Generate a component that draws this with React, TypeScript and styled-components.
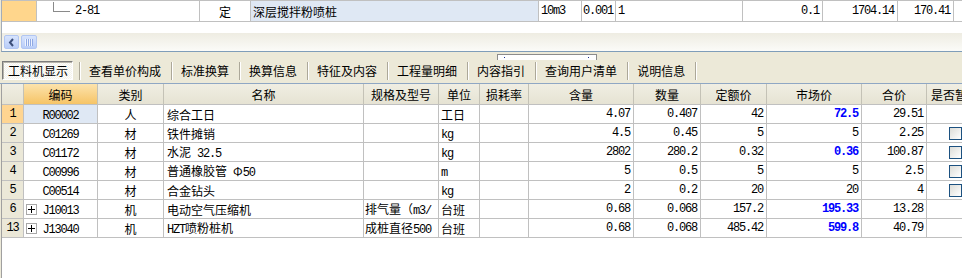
import React from "react";
import styled, { createGlobalStyle, css } from "styled-components";

const GlobalStyle = createGlobalStyle`
  html, body {
    margin: 0;
    padding: 0;
    background: #ece9d8;
  }
  body {
    font-family: "Noto Sans CJK SC", "Noto Sans", sans-serif;
    font-size: 12px;
    color: #000;
  }
`;

const Page = styled.div`
  width: 962px;
  height: 278px;
  overflow: hidden;
  display: flex;
  flex-direction: column;
  background: #ece9d8;
`;

const Latin = styled.span<{ $hl?: boolean }>`
  font-family: "Liberation Mono", monospace;
  letter-spacing: -1.2px;
  font-weight: ${(p) => (p.$hl ? 700 : 400)};
  color: ${(p) => (p.$hl ? "#0000ff" : "#000")};
`;

const TextRun = styled.span`
  white-space: pre;
`;

const Txt = ({ children }: { children: string }) => (
  <TextRun>
    {children
      .split(/([\x20-\x7e]+)/)
      .filter(Boolean)
      .map((s, i) =>
        /^[\x20-\x7e]+$/.test(s) ? (
          <Latin key={i}>{s}</Latin>
        ) : (
          <React.Fragment key={i}>{s}</React.Fragment>
        )
      )}
  </TextRun>
);

/* ---------- upper pane ---------- */

const TopPane = styled.div`
  height: 52px;
  box-sizing: border-box;
  margin-left: 1px;
  border-left: 1px solid #a3acb8;
  border-bottom: 1px solid #7f9db9;
  background: #fff;
  display: flex;
  flex-direction: column;
`;

const Row = styled.div<{ $cols: string; $h: number }>`
  display: grid;
  grid-template-columns: ${(p) => p.$cols};
  height: ${(p) => p.$h}px;
  flex-shrink: 0;
`;

const TopRowWrap = styled(Row)`
  border-top: 1px solid #c0c0c0;
`;

type Align = "left" | "center" | "right";

const Cell = styled.div<{ $align?: Align; $bg?: string; $pad?: number }>`
  box-sizing: border-box;
  border-right: 1px solid #c0c0c0;
  border-bottom: 1px solid #c0c0c0;
  display: flex;
  align-items: center;
  justify-content: ${(p) =>
    p.$align === "right"
      ? "flex-end"
      : p.$align === "center"
      ? "center"
      : "flex-start"};
  padding: 0 ${(p) => p.$pad ?? 3}px;
  overflow: hidden;
  white-space: nowrap;
  min-width: 0;
  background: ${(p) => p.$bg ?? "transparent"};
`;

const TreeLine = styled.span`
  width: 17px;
  height: 10px;
  margin: -9px 5px 0 16px;
  box-sizing: border-box;
  border-left: 1px solid #8a8a8a;
  border-bottom: 1px solid #8a8a8a;
  flex-shrink: 0;
`;

const Gap = styled.div`
  flex: 1;
`;

const HScroll = styled.div`
  height: 18px;
  display: flex;
  align-items: center;
  gap: 2px;
  padding-left: 2px;
  background: linear-gradient(#eeece2, #fbfbf8);
`;

const ScrollBtn = styled.div<{ $w: number }>`
  width: ${(p) => p.$w}px;
  height: 14px;
  box-sizing: border-box;
  border: 1px solid #b2c6f2;
  border-radius: 2px;
  background: linear-gradient(#d8e4fd, #b9cdf8);
  display: flex;
  align-items: center;
  justify-content: center;
`;

const Splitter = styled.div`
  height: 8px;
  display: flex;
  align-items: flex-end;
  padding-left: 497px;
`;

const Grip = styled.div`
  width: 100px;
  height: 6px;
  box-sizing: border-box;
  border: 1px solid #8c8c8c;
  border-bottom: none;
  background: #fff;
  display: flex;
  justify-content: space-between;
  align-items: center;
  padding: 0 7px 0 6px;
`;

const GripDot = styled.span`
  width: 1px;
  height: 1px;
  background: #1c2f8c;
`;

/* ---------- tabs ---------- */

const TabBar = styled.div`
  height: 24px;
  box-sizing: border-box;
  border-bottom: 1px solid #8fa7c4;
  display: flex;
  align-items: center;
  padding: 0 0 2px 2px;
`;

const Tab = styled.div<{ $active?: boolean }>`
  height: 19px;
  box-sizing: border-box;
  display: flex;
  align-items: center;
  padding: 0 10px 0 9px;
  white-space: nowrap;
  ${(p) =>
    p.$active &&
    css`
      padding: 0 4px 0 5px;
      margin-right: 6px;
      border: 1px solid;
      border-color: #7c7c7c #fff #fff #7c7c7c;
      box-shadow: inset 1px 1px #b8b6ac;
      background: repeating-conic-gradient(#f3f2ec 0 25%, #fdfdfb 0 50%) 0 0 /
        2px 2px;
    `}
`;

const TabSep = styled.div`
  width: 1px;
  height: 18px;
  background: #aca899;
  box-shadow: 1px 0 #fff;
`;

/* ---------- lower grid ---------- */

const LowerPane = styled.div`
  flex: 1;
  margin-left: 1px;
  border-left: 1px solid #a0a0a0;
  background: #fff;
  display: flex;
  flex-direction: column;
`;

const HeadCell = styled(Cell)<{ $sel?: boolean }>`
  justify-content: center;
  border-right-color: #c4c2b6;
  background: ${(p) =>
    p.$sel
      ? "linear-gradient(#fce3ac, #f6c466)"
      : "linear-gradient(#f0eee3, #e6e3d3)"};
`;

const NoCell = styled(Cell)<{ $sel?: boolean }>`
  justify-content: center;
  padding: 0;
  background: ${(p) => (p.$sel ? "#ffd591" : "#ebe8d8")};
`;

const CodeCell = styled(Cell)`
  padding: 0 13px 0 2px;
`;

const CodeText = styled.div`
  flex: 1;
  text-align: center;
`;

const ExpandBox = styled.span<{ $show: boolean }>`
  width: 11px;
  height: 11px;
  flex-shrink: 0;
  visibility: ${(p) => (p.$show ? "visible" : "hidden")};
  display: flex;
`;

const CheckBox = styled.span`
  width: 13px;
  height: 13px;
  box-sizing: border-box;
  border: 1px solid #1c5180;
  background: linear-gradient(135deg, #dcdcd7, #ffffff);
`;

const TOP_COLS = "35px 163px 51px 288px 43px 34px 127px 80px 75px 56px 40px";
const COLS =
  "22px 74px 66px 200px 75px 41px 49px 105px 67px 66px 95px 65px 57px";

const headers = [
  "",
  "编码",
  "类别",
  "名称",
  "规格及型号",
  "单位",
  "损耗率",
  "含量",
  "数量",
  "定额价",
  "市场价",
  "合价",
  "是否暂估",
];

const tabs = [
  "工料机显示",
  "查看单价构成",
  "标准换算",
  "换算信息",
  "特征及内容",
  "工程量明细",
  "内容指引",
  "查询用户清单",
  "说明信息",
];

interface Item {
  no: string;
  code: string;
  type: string;
  name: string;
  spec?: string;
  unit: string;
  qty: string;
  amount: string;
  quota: string;
  market: string;
  hl?: boolean;
  total: string;
  check?: boolean;
  expand?: boolean;
}

const items: Item[] = [
  { no: "1", code: "R00002", type: "人", name: "综合工日", unit: "工日", qty: "4.07", amount: "0.407", quota: "42", market: "72.5", hl: true, total: "29.51" },
  { no: "2", code: "C01269", type: "材", name: "铁件摊销", unit: "kg", qty: "4.5", amount: "0.45", quota: "5", market: "5", total: "2.25", check: true },
  { no: "3", code: "C01172", type: "材", name: "水泥 32.5", unit: "kg", qty: "2802", amount: "280.2", quota: "0.32", market: "0.36", hl: true, total: "100.87", check: true },
  { no: "4", code: "C00996", type: "材", name: "普通橡胶管 Φ50", unit: "m", qty: "5", amount: "0.5", quota: "5", market: "5", total: "2.5", check: true },
  { no: "5", code: "C00514", type: "材", name: "合金钻头", unit: "kg", qty: "2", amount: "0.2", quota: "20", market: "20", total: "4", check: true },
  { no: "6", code: "J10013", type: "机", name: "电动空气压缩机", spec: "排气量（m3/", unit: "台班", qty: "0.68", amount: "0.068", quota: "157.2", market: "195.33", hl: true, total: "13.28", expand: true },
  { no: "13", code: "J13040", type: "机", name: "HZT喷粉桩机", spec: "成桩直径500", unit: "台班", qty: "0.68", amount: "0.068", quota: "485.42", market: "599.8", hl: true, total: "40.79", expand: true },
];

const Num = ({ v, hl }: { v: string; hl?: boolean }) => (
  <Latin $hl={hl}>{v}</Latin>
);

const App = () => {
  return (
    <Page>
      <GlobalStyle />
      <TopPane>
        <TopRowWrap $cols={TOP_COLS} $h={21}>
          <Cell $bg="#ffd68c" />
          <Cell $pad={0}>
            <TreeLine />
            <Latin>2-81</Latin>
          </Cell>
          <Cell $align="center">定</Cell>
          <Cell $bg="#dfe8f4" $pad={2}>
            深层搅拌粉喷桩
          </Cell>
          <Cell $pad={2}>
            <Latin>10m3</Latin>
          </Cell>
          <Cell $pad={1}>
            <Latin>0.001</Latin>
          </Cell>
          <Cell $pad={2}>
            <Latin>1</Latin>
          </Cell>
          <Cell $align="right">
            <Num v="0.1" />
          </Cell>
          <Cell $align="right">
            <Num v="1704.14" />
          </Cell>
          <Cell $align="right">
            <Num v="170.41" />
          </Cell>
          <Cell />
        </TopRowWrap>
        <Gap />
        <HScroll>
          <ScrollBtn $w={15}>
            <svg width="7" height="9" viewBox="0 0 7 9">
              <polyline
                points="5,1 2,4.5 5,8"
                fill="none"
                stroke="#3c4f7a"
                strokeWidth="2"
              />
            </svg>
          </ScrollBtn>
          <ScrollBtn $w={16}>
            <svg width="8" height="7" viewBox="0 0 8 7">
              {[0, 2, 4, 6].map((x) => (
                <g key={x}>
                  <line x1={x + 0.5} y1="0" x2={x + 0.5} y2="7" stroke="#eef3ff" />
                  <line x1={x + 1.5} y1="0" x2={x + 1.5} y2="7" stroke="#8fa9e4" />
                </g>
              ))}
            </svg>
          </ScrollBtn>
        </HScroll>
      </TopPane>

      <Splitter>
        <Grip>
          <GripDot />
          <GripDot />
        </Grip>
      </Splitter>

      <TabBar>
        {tabs.map((t, i) => (
          <React.Fragment key={t}>
            <Tab $active={i === 0}>{t}</Tab>
            <TabSep />
          </React.Fragment>
        ))}
      </TabBar>

      <LowerPane>
        <Row $cols={COLS} $h={21}>
          {headers.map((h, i) => (
            <HeadCell key={i} $sel={i === 1}>
              {h}
            </HeadCell>
          ))}
        </Row>
        {items.map((it, idx) => (
          <Row key={it.no} $cols={COLS} $h={19}>
            <NoCell $sel={idx === 0}>
              <Latin>{it.no}</Latin>
            </NoCell>
            <CodeCell $bg={idx === 0 ? "#dfe8f4" : undefined}>
              <ExpandBox $show={!!it.expand}>
                <svg width="11" height="11" viewBox="0 0 11 11">
                  <rect x="0.5" y="0.5" width="10" height="10" fill="#fff" stroke="#a8a8a8" />
                  <line x1="2" y1="5.5" x2="9" y2="5.5" stroke="#000" />
                  <line x1="5.5" y1="2" x2="5.5" y2="9" stroke="#000" />
                </svg>
              </ExpandBox>
              <CodeText>
                <Latin>{it.code}</Latin>
              </CodeText>
            </CodeCell>
            <Cell $align="center">{it.type}</Cell>
            <Cell>
              <Txt>{it.name}</Txt>
            </Cell>
            <Cell $pad={1}>{it.spec ? <Txt>{it.spec}</Txt> : null}</Cell>
            <Cell $pad={2}>
              <Txt>{it.unit}</Txt>
            </Cell>
            <Cell />
            <Cell $align="right">
              <Num v={it.qty} />
            </Cell>
            <Cell $align="right">
              <Num v={it.amount} />
            </Cell>
            <Cell $align="right">
              <Num v={it.quota} />
            </Cell>
            <Cell $align="right">
              <Num v={it.market} hl={it.hl} />
            </Cell>
            <Cell $align="right">
              <Num v={it.total} />
            </Cell>
            <Cell $align="center" $pad={0}>
              {it.check ? <CheckBox /> : null}
            </Cell>
          </Row>
        ))}
      </LowerPane>
    </Page>
  );
};

export default App;
